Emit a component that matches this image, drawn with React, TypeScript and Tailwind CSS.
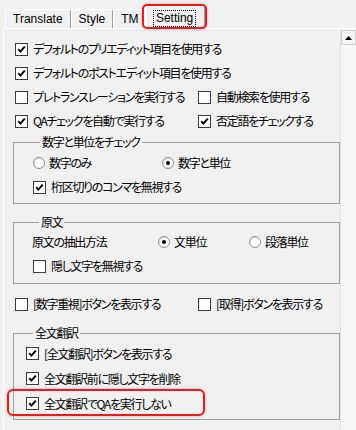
import React from "react";

// Classic Windows-style check box with a bold tick
function Box({ checked }: { checked?: boolean }) {
  return (
    <span className="flex h-[13px] w-[13px] shrink-0 items-center justify-center border border-[#3c3c3c] bg-white">
      {checked && (
        <svg viewBox="0 0 9 9" className="h-[9px] w-[9px]">
          <polyline
            points="1.2,4.2 3.4,6.6 7.8,1.6"
            fill="none"
            stroke="#000"
            strokeWidth="1.9"
          />
        </svg>
      )}
    </span>
  );
}

function Radio({ checked }: { checked?: boolean }) {
  return (
    <span className="flex h-[12px] w-[12px] shrink-0 items-center justify-center rounded-full border border-[#8e8e8e] bg-white shadow-[inset_1px_1px_1px_rgba(0,0,0,0.12)]">
      {checked && <span className="h-[4px] w-[4px] rounded-full bg-black" />}
    </span>
  );
}

function Check({ label, checked }: { label: string; checked?: boolean }) {
  return (
    <div className="flex items-center gap-[5px] whitespace-nowrap">
      <Box checked={checked} />
      <span>{label}</span>
    </div>
  );
}

function Option({ label, checked }: { label: string; checked?: boolean }) {
  return (
    <div className="flex items-center gap-[4px] whitespace-nowrap">
      <Radio checked={checked} />
      <span>{label}</span>
    </div>
  );
}

function Group({
  title,
  className,
  children,
}: {
  title: string;
  className?: string;
  children: React.ReactNode;
}) {
  return (
    <fieldset className={`w-[327px] border border-[#a0a0a0] ${className ?? ""}`}>
      <legend className="ml-[7px] h-[14px] px-[2px] leading-[14px]">{title}</legend>
      {children}
    </fieldset>
  );
}

const tabs = ["Translate", "Style", "TM"];

function Tabs() {
  return (
    <div className="relative flex h-[28px] items-end pl-[5px] font-['Liberation_Sans',sans-serif] text-[12px]">
      {tabs.map((tab) => (
        <div
          key={tab}
          className="flex h-[19px] items-center rounded-t-[2px] border-t border-l border-r border-t-white border-l-white border-r-[#a0a0a0] px-[7px] pb-[1px]"
        >
          {tab}
        </div>
      ))}
      <div className="z-10 -mb-[1px] -ml-[2px] flex h-[23px] w-[60px] items-center justify-center rounded-t-[2px] border-t border-l border-r border-t-white border-l-white border-r-[#a0a0a0] bg-[#f0f0f0]">
        <span className="border border-dotted border-black px-[2px] leading-[15px]">
          Setting
        </span>
      </div>
      {/* red highlight drawn over the active tab */}
      <div className="absolute left-[142px] top-[4px] z-20 h-[25px] w-[65px] rounded-[5px] border-2 border-[#f01818] shadow-[0_0_3px_rgba(0,0,0,0.25)]" />
    </div>
  );
}

function Scrollbar() {
  return (
    <div className="flex w-[16px] flex-col items-center border-l border-[#e2e2e2] bg-[#f6f6f6]">
      <div className="mt-[1px] flex h-[15px] w-[15px] items-center justify-center border border-[#cfcfcf] bg-[#f3f3f3]">
        <svg viewBox="0 0 7 4" className="h-[4px] w-[7px]">
          <polygon points="3.5,0 7,4 0,4" fill="#000" />
        </svg>
      </div>
    </div>
  );
}

export default function App() {
  return (
    <div className="h-[430px] w-[356px] overflow-hidden bg-[#f0f0f0] text-[12px] leading-[14px] text-black">
      <Tabs />
      <div className="ml-[3px] flex h-[402px] border-t border-l border-white font-['Noto_Sans_CJK_JP','Noto_Sans',sans-serif] tracking-[-1.3px] [font-feature-settings:'palt']">
        <div className="flex-1 pl-[9px] pt-[8px]">
          <div className="ml-[2px]">
            <div className="flex h-[24px] items-center">
              <Check checked label="デフォルトのプリエディット項目を使用する" />
            </div>
            <div className="flex h-[24px] items-center">
              <Check checked label="デフォルトのポストエディット項目を使用する" />
            </div>
            <div className="grid h-[24px] grid-cols-[183px_1fr] items-center">
              <Check label="プレトランスレーションを実行する" />
              <Check label="自動検索を使用する" />
            </div>
            <div className="grid h-[24px] grid-cols-[183px_1fr] items-center">
              <Check checked label="QAチェックを自動で実行する" />
              <Check checked label="否定語をチェックする" />
            </div>
          </div>

          <Group title="数字と単位をチェック" className="mt-[2px] pb-[4px] pl-[19px] pt-[2px]">
            <div className="flex h-[24px] items-center">
              <div className="w-[129px]">
                <Option label="数字のみ" />
              </div>
              <Option checked label="数字と単位" />
            </div>
            <div className="flex h-[24px] items-center">
              <Check checked label="桁区切りのコンマを無視する" />
            </div>
          </Group>

          <Group title="原文" className="mt-[11px] pb-[5px] pl-[18px] pt-[1px]">
            <div className="flex h-[24px] items-center">
              <span className="w-[126px]">原文の抽出方法</span>
              <div className="w-[91px]">
                <Option checked label="文単位" />
              </div>
              <Option label="段落単位" />
            </div>
            <div className="ml-[1px] flex h-[24px] items-center">
              <Check label="隠し文字を無視する" />
            </div>
          </Group>

          <div className="ml-[2px] mt-[8px] grid h-[24px] grid-cols-[183px_1fr] items-center">
            <Check label="[数字重視]ボタンを表示する" />
            <Check label="[取得]ボタンを表示する" />
          </div>

          <Group title="全文翻訳" className="mt-[10px] pb-[3px] pl-[12px] pt-[1px]">
            <div className="flex h-[25px] items-center">
              <Check checked label="[全文翻訳]ボタンを表示する" />
            </div>
            <div className="flex h-[25px] items-center">
              <Check checked label="全文翻訳前に隠し文字を削除" />
            </div>
            <div className="relative flex h-[25px] items-center">
              <Check checked label="全文翻訳でQAを実行しない" />
              {/* red highlight around the last option */}
              <div className="absolute left-[-19px] top-[-2px] h-[27px] w-[198px] rounded-[6px] border-2 border-[#f01818] shadow-[0_0_3px_rgba(0,0,0,0.25)]" />
            </div>
          </Group>
        </div>
        <Scrollbar />
      </div>
    </div>
  );
}
